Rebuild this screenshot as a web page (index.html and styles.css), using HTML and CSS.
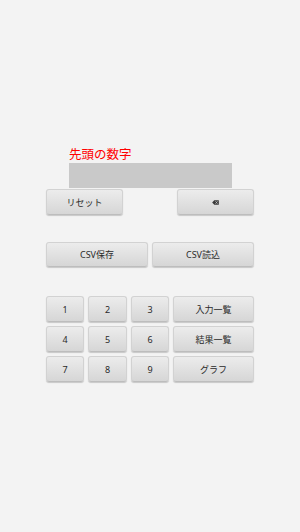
FILE: index.html
```html
<!DOCTYPE html>
<html lang="ja">
<head>
    <meta charset="UTF-8" />
    <meta name="viewport" content="width=device-width, initial-scale=1.0" />
    <title>先頭の数字</title>
    <link rel="stylesheet" href="styles.css">
</head>
<body>

    <div class="panel">
        <div class="label">先頭の数字</div>
        <div class="display" id="display"></div>

        <div class="row-top">
            <button class="btn btn-wide">リセット</button>
            <button class="btn btn-wide">
                <svg width="7" height="5" viewBox="0 0 8 6">
                    <path d="M0 3 L2.5 0.3 H8 V5.7 H2.5 Z" fill="#3a3a3a"/>
                    <path d="M4 1.6 L6.4 4.4 M6.4 1.6 L4 4.4" stroke="#ccc" stroke-width="0.9"/>
                </svg>
            </button>
        </div>

        <div class="row-csv">
            <button class="btn">CSV保存</button>
            <button class="btn">CSV読込</button>
        </div>

        <div class="keypad">
            <button class="btn">1</button>
            <button class="btn">2</button>
            <button class="btn">3</button>
            <button class="btn">入力一覧</button>
            <button class="btn">4</button>
            <button class="btn">5</button>
            <button class="btn">6</button>
            <button class="btn">結果一覧</button>
            <button class="btn">7</button>
            <button class="btn">8</button>
            <button class="btn">9</button>
            <button class="btn">グラフ</button>
        </div>
    </div>

</body>
</html>
```

FILE: styles.css
```css
body {
    margin: 0;
    background-color: #f3f3f3;
    font-family: "Noto Sans", "Noto Sans CJK JP", sans-serif;
    height: 532px;
}

.panel {
    width: 208px;
    margin: 0 auto;
    padding-top: 147px;
}

.label {
    margin-left: 23px;
    height: 16px;
    line-height: 16px;
    font-size: 12.5px;
    color: #ff0000;
}

.display {
    margin-left: 23px;
    width: 163px;
    height: 25px;
    background-color: #c9c9c9;
}

.btn {
    display: flex;
    align-items: center;
    justify-content: center;
    margin: 0;
    padding: 0;
    font-family: "Noto Sans", "Noto Sans CJK JP", sans-serif;
    font-size: 9px;
    color: #2a2a2a;
    background: linear-gradient(#ececec, #d6d6d6);
    border: 1px solid #d2d2d2;
    border-bottom-color: #bdbdbd;
    border-radius: 3px;
    box-shadow: 0 1px 1px rgba(0,0,0,0.18);
}

.row-top {
    display: flex;
    justify-content: space-between;
    margin-top: 1px;
}

    .row-top .btn {
        width: 77px;
        height: 26px;
    }

.row-csv {
    display: grid;
    grid-template-columns: 1fr 1fr;
    gap: 4px;
    margin-top: 27px;
}

    .row-csv .btn {
        height: 25px;
    }

.keypad {
    display: grid;
    grid-template-columns: 38px 39px 38px 1fr;
    grid-auto-rows: 26px;
    gap: 4px;
    margin-top: 29px;
}
```
